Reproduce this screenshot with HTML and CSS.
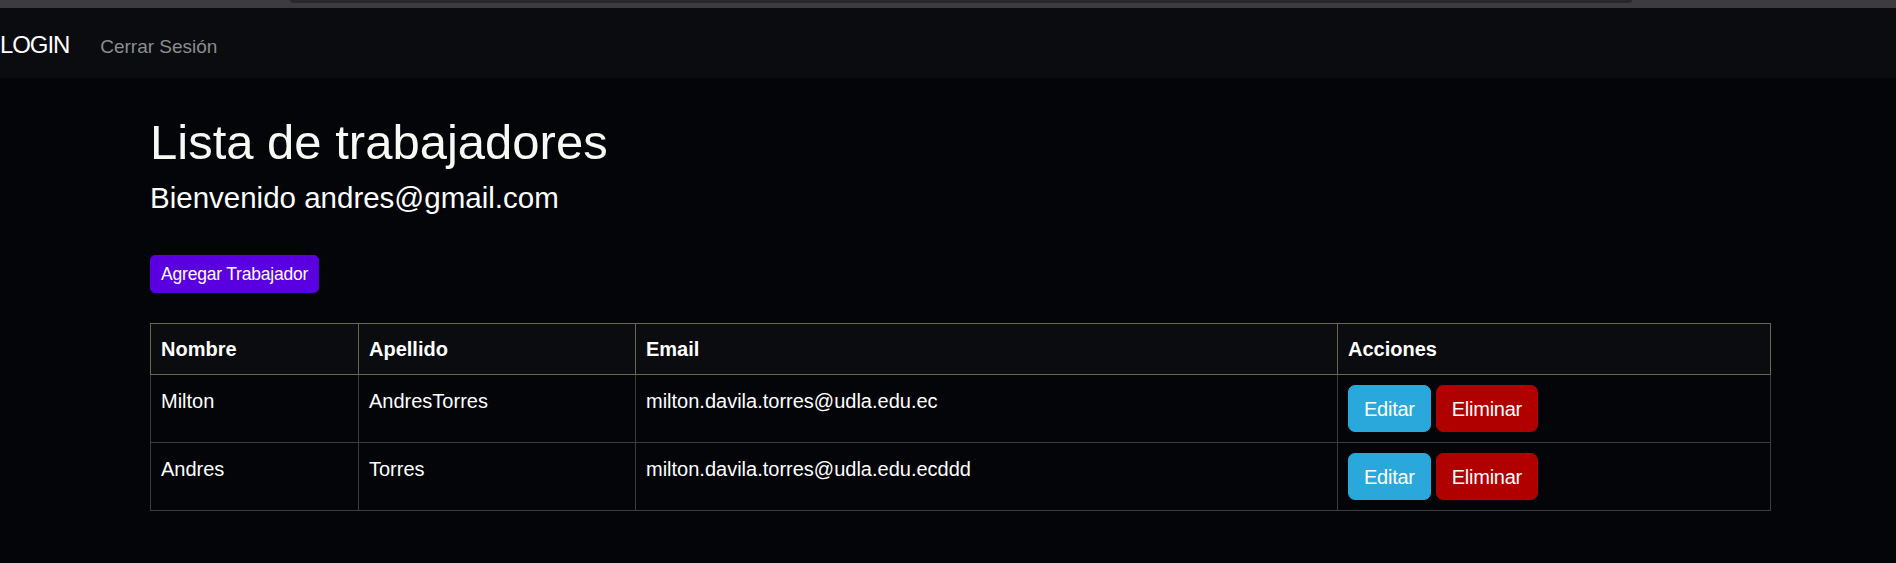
FILE: index.html
```html
<!DOCTYPE html>
<html lang="es">
<head>
<meta charset="utf-8">
<title>Lista de trabajadores</title>
<link rel="stylesheet" href="styles.css">
</head>
<body>
<div class="chrome"><div class="chrome-tab"></div></div>
<nav class="navbar">
  <a class="brand" href="#">LOGIN</a>
  <a class="nav-link" href="#">Cerrar Sesión</a>
</nav>
<main class="container">
  <h1 class="title">Lista de trabajadores</h1>
  <h4 class="welcome">Bienvenido andres@gmail.com</h4>
  <div class="toolbar">
    <button class="btn btn-sm btn-add">Agregar Trabajador</button>
  </div>
  <table class="table">
    <colgroup>
      <col class="col-nombre">
      <col class="col-apellido">
      <col class="col-email">
      <col class="col-acciones">
    </colgroup>
    <thead>
      <tr>
        <th>Nombre</th>
        <th>Apellido</th>
        <th>Email</th>
        <th>Acciones</th>
      </tr>
    </thead>
    <tbody>
      <tr>
        <td class="text-cell">Milton</td>
        <td class="text-cell">AndresTorres</td>
        <td class="text-cell">milton.davila.torres@udla.edu.ec</td>
        <td class="action-cell">
          <div class="actions">
            <button class="btn btn-edit">Editar</button>
            <button class="btn btn-delete">Eliminar</button>
          </div>
        </td>
      </tr>
      <tr>
        <td class="text-cell">Andres</td>
        <td class="text-cell">Torres</td>
        <td class="text-cell">milton.davila.torres@udla.edu.ecddd</td>
        <td class="action-cell">
          <div class="actions">
            <button class="btn btn-edit">Editar</button>
            <button class="btn btn-delete">Eliminar</button>
          </div>
        </td>
      </tr>
    </tbody>
  </table>
</main>
</body>
</html>
```

FILE: styles.css
```css
* {
  box-sizing: border-box;
}

html, body {
  margin: 0;
  padding: 0;
}

body {
  background: #030508;
  color: #ffffff;
  font-family: "Liberation Sans", Arial, sans-serif;
  min-height: 563px;
}

.chrome {
  height: 8px;
  background: #3d3b40;
}

.chrome-tab {
  margin-left: 290px;
  width: 1342px;
  height: 3px;
  background: #29272c;
  border-radius: 0 0 4px 4px;
}

.navbar {
  display: flex;
  align-items: baseline;
  height: 70px;
  padding-top: 18px;
  background: #0a0c0f;
}

.brand {
  color: #ffffff;
  text-decoration: none;
  font-size: 24px;
  line-height: 37.5px;
  letter-spacing: -1.1px;
  margin-right: 31px;
}

.nav-link {
  color: #8b8d90;
  text-decoration: none;
  font-size: 19px;
  line-height: 30px;
}

.container {
  width: 1620px;
  margin: 34px 0 0 150px;
}

.title {
  margin: 0 0 8px;
  font-size: 49px;
  font-weight: 400;
  line-height: 60px;
  color: #f8f8f4;
}

.welcome {
  margin: 0 0 39px;
  font-size: 29.5px;
  font-weight: 400;
  line-height: 36px;
  color: #ffffff;
}

.toolbar {
  display: flex;
  margin-bottom: 30px;
}

.btn {
  font-family: inherit;
  color: #ffffff;
  cursor: pointer;
  border: 1px solid transparent;
  font-size: 20px;
  line-height: 30px;
  padding: 7.5px 15px;
  border-radius: 7px;
  letter-spacing: -0.25px;
}

.btn-sm {
  font-size: 17.5px;
  line-height: 26px;
  padding: 5px 10px;
  border-radius: 5px;
  letter-spacing: -0.2px;
}

.btn-add {
  background: #5a00e0;
  border-color: #5a00e0;
}

.btn-edit {
  background: #2aa8dc;
  border-color: #2aa8dc;
}

.btn-delete {
  background: #b00000;
  border-color: #b00000;
}

.table {
  width: 1620px;
  border-collapse: collapse;
  table-layout: fixed;
  font-size: 20px;
  line-height: 30px;
}

.col-nombre { width: 208px; }
.col-apellido { width: 277px; }
.col-email { width: 702px; }
.col-acciones { width: 433px; }

.table th {
  background: #0a0c10;
  border: 1px solid #6b6550;
  text-align: left;
  font-weight: 700;
  padding: 10px;
  vertical-align: top;
}

.table td {
  border: 1px solid #3a3c3e;
  padding: 10px;
  vertical-align: top;
}

.table td.text-cell {
  padding: 11px 10px 9px;
}

.actions {
  display: flex;
  gap: 5px;
}
```
